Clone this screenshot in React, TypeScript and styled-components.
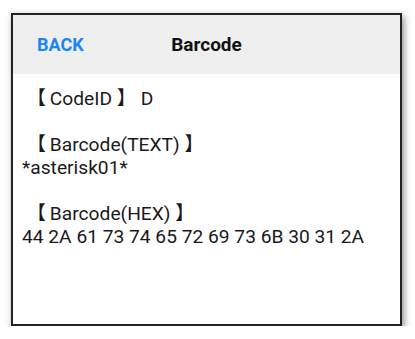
import React from 'react'
import styled, { createGlobalStyle } from 'styled-components'

const GlobalStyle = createGlobalStyle`
    body {
        margin: 0;
        background: #ffffff;
        font-family: Roboto, "Noto Sans CJK JP", sans-serif;
    }
`

const StyledFrame = styled.div`
    margin: 13px 0 0 11px;
    width: 391px;
    height: 313px;
    box-sizing: border-box;
    border: 2px solid #222222;
    background: #ffffff;
    box-shadow: 2px 3px 7px rgba(0, 0, 0, 0.45);
    display: flex;
    flex-direction: column;
`

const StyledHeader = styled.div`
    height: 59px;
    flex-shrink: 0;
    background: #efefef;
    display: grid;
    grid-template-columns: 1fr auto 1fr;
    align-items: center;
    padding: 0 24px;
`

const StyledBack = styled.span`
    color: #1a86f4;
    font-weight: 700;
    font-size: 18px;
    justify-self: start;
`

const StyledTitle = styled.span`
    color: #111111;
    font-weight: 700;
    font-size: 19px;
`

const StyledBody = styled.div`
    padding: 13px 9px;
    font-size: 19.2px;
    line-height: 23px;
    color: #1a1a1a;
`

const StyledSection = styled.div`
    margin-bottom: 23px;
`

const StyledLine = styled.div`
    white-space: pre;
`

const sections: string[][] = [
    [' 【\u2009CodeID 】 D'],
    [' 【\u2009Barcode(TEXT) 】', '*asterisk01*'],
    [' 【\u2009Barcode(HEX) 】', '44 2A 61 73 74 65 72 69 73 6B 30 31 2A'],
]

const App = () => {
    return (
        <>
            <GlobalStyle />
            <StyledFrame>
                <StyledHeader>
                    <StyledBack>BACK</StyledBack>
                    <StyledTitle>Barcode</StyledTitle>
                    <span />
                </StyledHeader>
                <StyledBody>
                    {sections.map((lines, i) => (
                        <StyledSection key={i}>
                            {lines.map((line) => (
                                <StyledLine key={line}>{line}</StyledLine>
                            ))}
                        </StyledSection>
                    ))}
                </StyledBody>
            </StyledFrame>
        </>
    )
}

export default App
